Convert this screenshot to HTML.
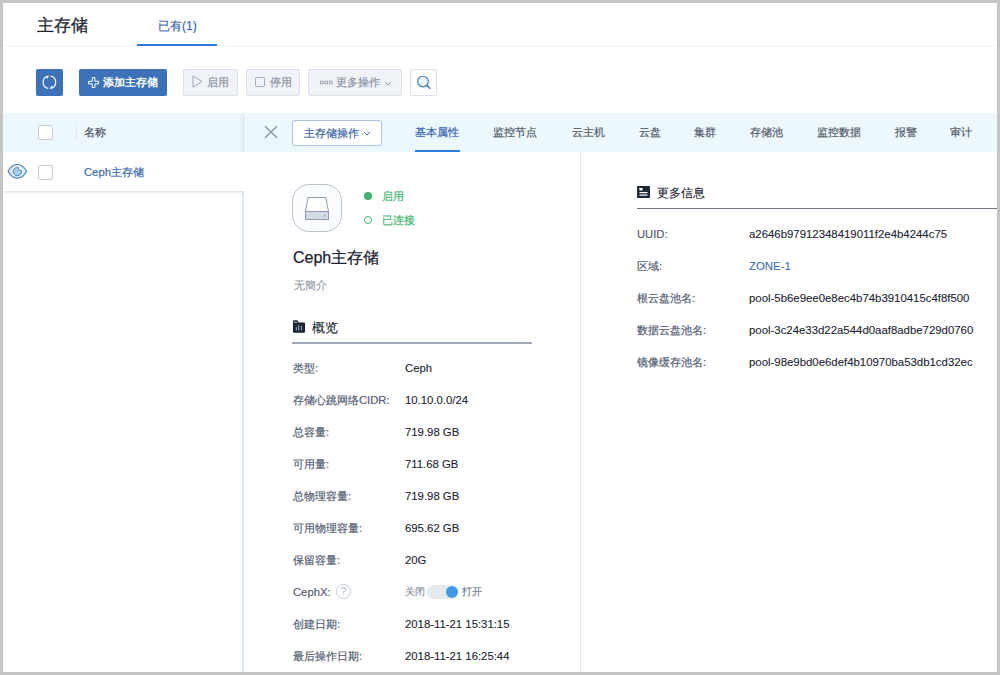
<!DOCTYPE html>
<html><head><meta charset="utf-8">
<style>
*{box-sizing:border-box;margin:0;padding:0}
html,body{width:1000px;height:675px;overflow:hidden;background:#c4c4c4}
body{font-family:"Liberation Sans",sans-serif;position:relative}
.a{position:absolute;white-space:nowrap}
.btn{position:absolute;top:69px;height:27px;border-radius:2px}
.dis{background:#eff2f6;border:1px solid #dde2e9;color:#8a94a3;font-size:11.25px;line-height:25px;-webkit-text-stroke:0.2px currentColor}
.tab{position:absolute;top:124px;font-size:11.25px;line-height:16px;color:#555e6b;-webkit-text-stroke:0.2px currentColor}
.lb{position:absolute;left:293px;font-size:11.25px;line-height:16px;color:#566172;-webkit-text-stroke:0.2px currentColor}
.vl{position:absolute;left:405px;font-size:11.35px;line-height:16px;color:#1c2433;-webkit-text-stroke:0.1px currentColor}
.lb2{position:absolute;left:637px;font-size:11.25px;line-height:16px;color:#566172;-webkit-text-stroke:0.2px currentColor}
.vl2{position:absolute;left:749px;font-size:11.4px;line-height:16px;color:#1c2433;-webkit-text-stroke:0.1px currentColor}
.cb{position:absolute;left:38px;width:15px;height:15px;border:1px solid #c5cad3;border-radius:2px;background:#fff}
</style></head><body>
<div class="a" style="left:3px;top:3px;width:994px;height:669px;background:#fff"></div>

<!-- header -->
<div class="a" style="left:37px;top:15px;font-size:17px;line-height:22px;color:#1f2633;-webkit-text-stroke:0.3px #1f2633">主存储</div>
<div class="a" style="left:158px;top:17px;font-size:12px;line-height:18px;color:#3a68ad;-webkit-text-stroke:0.2px currentColor">已有(1)</div>
<div class="a" style="left:3px;top:45px;width:994px;height:1px;background:#eef1f5"></div>
<div class="a" style="left:137px;top:44px;width:80px;height:2px;background:#2f7ae0"></div>

<!-- toolbar -->
<div class="btn" style="left:36px;width:27px;background:#3d72b9">
  <svg width="27" height="27" viewBox="0 0 27 27" style="position:absolute;left:0;top:0">
    <path d="M14.5 7 A6.3 6.3 0 0 1 14.5 19.4" fill="none" stroke="#fff" stroke-width="1.2"/>
    <path d="M12.3 19.4 A6.3 6.3 0 0 1 12.3 7" fill="none" stroke="#fff" stroke-width="1.2"/>
    <path d="M10.6 8.4 L12.4 6.8 L11 9.8 Z" fill="#fff" stroke="#fff" stroke-width="0.4"/>
    <path d="M16.2 18 L14.4 19.6 L15.8 16.6 Z" fill="#fff" stroke="#fff" stroke-width="0.4"/>
  </svg>
</div>
<div class="btn" style="left:79px;width:88px;background:#3d72b9">
  <svg width="12" height="12" viewBox="0 0 12 12" style="position:absolute;left:8.5px;top:8px">
    <path d="M4.3 0.6 H6.9 V4.3 H10.6 V6.9 H6.9 V10.6 H4.3 V6.9 H0.6 V4.3 H4.3 Z" fill="none" stroke="#fff" stroke-width="1"/>
  </svg>
  <div class="a" style="left:24px;top:5px;font-size:11.25px;line-height:16px;color:#fff;font-weight:600">添加主存储</div>
</div>
<div class="btn dis" style="left:183px;width:55px">
  <svg width="11" height="13" viewBox="0 0 11 13" style="position:absolute;left:8px;top:5px">
    <path d="M1 0.8 L10 6.5 L1 12.2 Z" fill="none" stroke="#98a1af" stroke-width="0.9"/>
  </svg>
  <div class="a" style="left:23px;top:0">启用</div>
</div>
<div class="btn dis" style="left:246px;width:54px">
  <div class="a" style="left:8px;top:6.5px;width:10px;height:10px;border:1px solid #a4adbb;border-radius:1.5px"></div>
  <div class="a" style="left:23px;top:0">停用</div>
</div>
<div class="btn dis" style="left:308px;width:94px">
  <div class="a" style="left:11px;top:0;font-size:9px;letter-spacing:0px">
    <svg width="14" height="6" viewBox="0 0 14 6" style="position:absolute;left:0;top:10px">
      <rect x="0.5" y="1.2" width="2.6" height="2.6" fill="none" stroke="#9aa3b1" stroke-width="0.9"/>
      <rect x="5" y="1.2" width="2.6" height="2.6" fill="none" stroke="#9aa3b1" stroke-width="0.9"/>
      <rect x="9.5" y="1.2" width="2.6" height="2.6" fill="none" stroke="#9aa3b1" stroke-width="0.9"/>
    </svg>
  </div>
  <div class="a" style="left:27px;top:0">更多操作</div>
  <svg width="8" height="5" viewBox="0 0 8 5" style="position:absolute;left:75px;top:11px">
    <path d="M1 1 L4 4 L7 1" fill="none" stroke="#8a94a3" stroke-width="1"/>
  </svg>
</div>
<div class="btn" style="left:410px;width:27px;background:#fff;border:1px solid #dde2e9">
  <svg width="18" height="18" viewBox="0 0 18 18" style="position:absolute;left:5px;top:4px">
    <circle cx="7" cy="7.5" r="5.3" fill="#eef5fc" stroke="#4078c2" stroke-width="1.15"/>
    <path d="M11 11.5 L13.8 14.3" stroke="#3d72b9" stroke-width="1.5" stroke-linecap="round"/>
  </svg>
</div>

<!-- table header band -->
<div class="a" style="left:3px;top:113px;width:994px;height:39px;background:#edf7fe"></div>
<div class="cb" style="top:125px"></div>
<div class="a" style="left:76px;top:126px;width:1px;height:14px;background:#dfe5ec"></div>
<div class="a" style="left:84px;top:124px;font-size:11.25px;line-height:16px;color:#4a5260;-webkit-text-stroke:0.2px currentColor">名称</div>

<!-- row -->
<svg class="a" width="21" height="16" viewBox="0 0 21 16" style="left:7px;top:164px">
  <path d="M1 7.3 C3 3.4 6 0.5 10.3 0.5 C14.6 0.5 17.6 3.4 19.6 7.3 C17.6 11.2 14.6 14.1 10.3 14.1 C6 14.1 3 11.2 1 7.3 Z" fill="#d3e4f7" stroke="#4a86cf" stroke-width="1.1"/>
  <circle cx="10.3" cy="7.3" r="5.7" fill="#fff"/>
  <path d="M11.60 3.37 A4.3 4.3 0 1 0 14.53 6.30 L12.60 6.30 Q11.60 6.30 11.60 5.30 Z" fill="#a3caef" stroke="#4a86cf" stroke-width="1"/>
</svg>
<div class="cb" style="top:165px"></div>
<div class="a" style="left:84px;top:164px;font-size:11.25px;line-height:16px;color:#3a69b1;-webkit-text-stroke:0.2px currentColor">Ceph主存储</div>
<div class="a" style="left:3px;top:191px;width:240px;height:1px;background:#e3eaf2;box-shadow:0 1px 2px rgba(200,215,230,0.6)"></div>

<!-- detail panel -->
<div class="a" style="left:243px;top:113px;width:1px;height:39px;background:#d6e1ec;box-shadow:-2px 0 3px rgba(190,210,230,0.45)"></div>
<div class="a" style="left:243px;top:191px;width:1px;height:481px;background:#d5e1ec;box-shadow:-1px 0 2px rgba(195,212,228,0.8)"></div>
<svg class="a" width="14" height="14" viewBox="0 0 14 14" style="left:264px;top:125px">
  <path d="M1.4 1.4 L12.6 12.6 M12.6 1.4 L1.4 12.6" stroke="#8791a1" stroke-width="1.35" stroke-linecap="round"/>
</svg>
<div class="a" style="left:292px;top:120px;width:90px;height:26px;border:1px solid #a9c2e6;border-radius:3px;background:#fff"></div>
<div class="a" style="left:304px;top:125px;font-size:11.25px;line-height:16px;color:#3a64a8;-webkit-text-stroke:0.2px currentColor">主存储操作</div>
<svg class="a" width="8" height="5" viewBox="0 0 8 5" style="left:363px;top:131px">
  <path d="M1 1 L4 4 L7 1" fill="none" stroke="#3d65a6" stroke-width="1"/>
</svg>

<div class="tab" style="left:415px;color:#3466b0">基本属性</div>
<div class="a" style="left:415px;top:150px;width:45px;height:2px;background:#2f7ae0"></div>
<div class="tab" style="left:493px">监控节点</div>
<div class="tab" style="left:572px">云主机</div>
<div class="tab" style="left:639px">云盘</div>
<div class="tab" style="left:694px">集群</div>
<div class="tab" style="left:750px">存储池</div>
<div class="tab" style="left:817px">监控数据</div>
<div class="tab" style="left:895px">报警</div>
<div class="tab" style="left:950px">审计</div>

<div class="a" style="left:580px;top:152px;width:1px;height:520px;background:#e5e9ee"></div>

<!-- left column -->
<div class="a" style="left:292px;top:184px;width:50px;height:48px;border:1px solid #b9c1cd;border-radius:17px;background:#fafcfe"></div>
<svg class="a" width="26" height="24" viewBox="0 0 26 24" style="left:304px;top:196.5px">
  <path d="M4 0.5 H21.8 L24.5 14.5 H1.5 Z" fill="#fff" stroke="#8f9bb0" stroke-width="1"/>
  <rect x="1.5" y="14.5" width="23" height="8" fill="#d5dbe5" stroke="#8f9bb0" stroke-width="1"/>
  <rect x="20" y="18" width="1.5" height="1.5" fill="#8f9bb0"/>
</svg>
<div class="a" style="left:364px;top:192px;width:8px;height:8px;border-radius:50%;background:#3db56f"></div>
<div class="a" style="left:382px;top:188px;font-size:11.25px;line-height:16px;color:#3db56f;-webkit-text-stroke:0.2px currentColor">启用</div>
<div class="a" style="left:364px;top:216px;width:8px;height:8px;border-radius:50%;border:1px solid #3db56f"></div>
<div class="a" style="left:382px;top:212px;font-size:11.25px;line-height:16px;color:#3db56f;-webkit-text-stroke:0.2px currentColor">已连接</div>

<div class="a" style="left:293px;top:247px;font-size:16px;line-height:22px;color:#1c2433;-webkit-text-stroke:0.25px #1c2433">Ceph主存储</div>
<div class="a" style="left:294px;top:277px;font-size:11.25px;line-height:16px;color:#8e97a6;-webkit-text-stroke:0.15px currentColor">无簡介</div>

<svg class="a" width="14" height="14" viewBox="0 0 14 14" style="left:292px;top:320px">
  <path d="M1 1.3 Q1 0.3 2 0.3 H5 Q5.8 0.3 6.2 1.2 L6.8 2.6 H12 Q13 2.6 13 3.6 V11.7 Q13 12.7 12 12.7 H2 Q1 12.7 1 11.7 Z" fill="#15202e"/>
  <path d="M1.8 2.2 H5.6" stroke="#c9ced6" stroke-width="0.9"/>
  <rect x="2.4" y="4" width="9.2" height="7.6" fill="#1f2b3b"/>
  <rect x="3.8" y="7.1" width="1.1" height="3.3" fill="#9aa2ad"/>
  <rect x="6.1" y="5.4" width="1.1" height="5" fill="#9aa2ad"/>
  <rect x="8.9" y="6.1" width="1.1" height="4.3" fill="#9aa2ad"/>
</svg>
<div class="a" style="left:312px;top:319px;font-size:13px;line-height:18px;color:#1c2433;-webkit-text-stroke:0.1px #1c2433">概览</div>
<div class="a" style="left:292px;top:342px;width:240px;height:2px;background:#9ea7b3"></div>

<div class="lb" style="top:360px">类型:</div><div class="vl" style="top:360px">Ceph</div>
<div class="lb" style="top:392px">存储心跳网络CIDR:</div><div class="vl" style="top:392px">10.10.0.0/24</div>
<div class="lb" style="top:424px">总容量:</div><div class="vl" style="top:424px">719.98 GB</div>
<div class="lb" style="top:456px">可用量:</div><div class="vl" style="top:456px">711.68 GB</div>
<div class="lb" style="top:488px">总物理容量:</div><div class="vl" style="top:488px">719.98 GB</div>
<div class="lb" style="top:520px">可用物理容量:</div><div class="vl" style="top:520px">695.62 GB</div>
<div class="lb" style="top:552px">保留容量:</div><div class="vl" style="top:552px">20G</div>
<div class="lb" style="top:584px">CephX:</div>
<div class="a" style="left:336px;top:584px;width:15px;height:15px;border:1px solid #c3cedb;border-radius:50%;font-size:11px;line-height:13px;text-align:center;color:#b0bccb">?</div>
<div class="a" style="left:405px;top:584px;font-size:10px;line-height:16px;color:#8a93a2;-webkit-text-stroke:0.15px currentColor">关闭</div>
<div class="a" style="left:427px;top:585px;width:31px;height:14px;border-radius:7px;background:#e6ebf0"></div>
<div class="a" style="left:446px;top:586px;width:12px;height:12px;border-radius:50%;background:#3d9be9"></div>
<div class="a" style="left:462px;top:584px;font-size:10px;line-height:16px;color:#6b7584;-webkit-text-stroke:0.15px currentColor">打开</div>
<div class="lb" style="top:616px">创建日期:</div><div class="vl" style="top:616px">2018-11-21 15:31:15</div>
<div class="lb" style="top:648px">最后操作日期:</div><div class="vl" style="top:648px">2018-11-21 16:25:44</div>

<!-- right column -->
<svg class="a" width="14" height="14" viewBox="0 0 14 14" style="left:637px;top:185px">
  <rect x="0" y="1" width="13" height="12" fill="#1f2a3a"/>
  <rect x="2.3" y="3" width="3.3" height="2.4" rx="0.6" fill="#fff"/>
  <rect x="2.5" y="7" width="8" height="1.2" fill="#fff"/>
  <rect x="2.5" y="9.5" width="8" height="1.2" fill="#fff"/>
</svg>
<div class="a" style="left:657px;top:184px;font-size:12.25px;line-height:18px;color:#1c2433;-webkit-text-stroke:0.1px #1c2433">更多信息</div>
<div class="a" style="left:637px;top:208px;width:360px;height:1px;background:#6b7685"></div>

<div class="lb2" style="top:226px">UUID:</div><div class="vl2" style="top:226px">a2646b97912348419011f2e4b4244c75</div>
<div class="lb2" style="top:258px">区域:</div><div class="vl2" style="top:258px;color:#3b6fb6">ZONE-1</div>
<div class="lb2" style="top:290px">根云盘池名:</div><div class="vl2" style="top:290px">pool-5b6e9ee0e8ec4b74b3910415c4f8f500</div>
<div class="lb2" style="top:322px">数据云盘池名:</div><div class="vl2" style="top:322px">pool-3c24e33d22a544d0aaf8adbe729d0760</div>
<div class="lb2" style="top:354px">镜像缓存池名:</div><div class="vl2" style="top:354px">pool-98e9bd0e6def4b10970ba53db1cd32ec</div>
</body></html>
